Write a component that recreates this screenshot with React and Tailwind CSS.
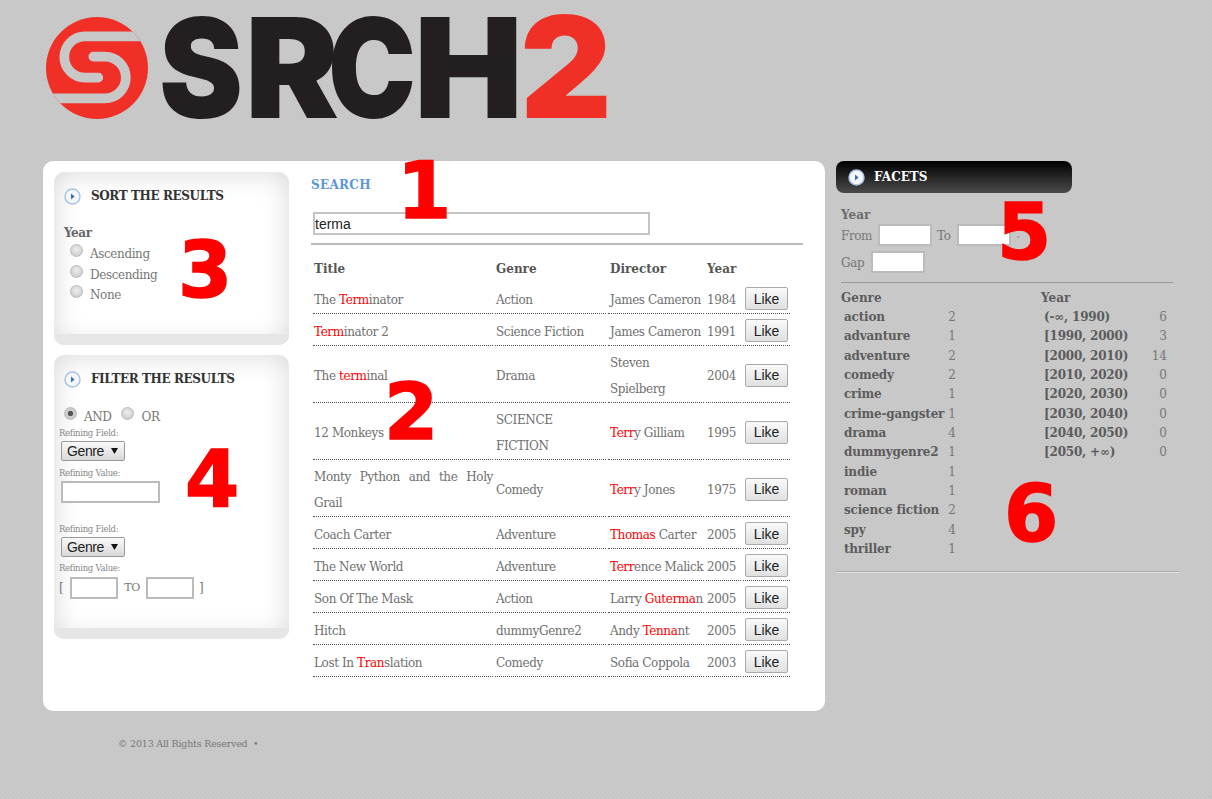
const serif = { fontFamily: '"DejaVu Serif", serif' };

const Hl = ({ children }) => <span className="text-[#f00]">{children}</span>;

const movies = [
  { title: <>The <Hl>Term</Hl>inator</>, genre: 'Action', director: 'James Cameron', year: 1984 },
  { title: <><Hl>Term</Hl>inator 2</>, genre: 'Science Fiction', director: 'James Cameron', year: 1991 },
  { title: <>The <Hl>term</Hl>inal</>, genre: 'Drama', director: <>Steven<br />Spielberg</>, year: 2004 },
  { title: '12 Monkeys', genre: <>SCIENCE<br />FICTION</>, director: <><Hl>Terr</Hl>y Gilliam</>, year: 1995 },
  { title: 'Monty Python and the Holy Grail', genre: 'Comedy', director: <><Hl>Terr</Hl>y Jones</>, year: 1975 },
  { title: 'Coach Carter', genre: 'Adventure', director: <><Hl>Thomas</Hl> Carter</>, year: 2005 },
  { title: 'The New World', genre: 'Adventure', director: <><Hl>Terr</Hl>ence Malick</>, year: 2005 },
  { title: 'Son Of The Mask', genre: 'Action', director: <>Larry <Hl>Guterma</Hl>n</>, year: 2005 },
  { title: 'Hitch', genre: 'dummyGenre2', director: <>Andy <Hl>Tenna</Hl>nt</>, year: 2005 },
  { title: <>Lost In <Hl>Tran</Hl>slation</>, genre: 'Comedy', director: 'Sofia Coppola', year: 2003 },
];

const genres = [
  ['action', 2], ['advanture', 1], ['adventure', 2], ['comedy', 2], ['crime', 1],
  ['crime-gangster', 1], ['drama', 4], ['dummygenre2', 1], ['indie', 1], ['roman', 1],
  ['science fiction', 2], ['spy', 4], ['thriller', 1],
];

const years = [
  ['(-∞, 1990)', 6], ['[1990, 2000)', 3], ['[2000, 2010)', 14], ['[2010, 2020)', 0],
  ['[2020, 2030)', 0], ['[2030, 2040)', 0], ['[2040, 2050)', 0], ['[2050, +∞)', 0],
];

const PlayIcon = () => (
  <svg width="17" height="17" viewBox="0 0 17 17" className="shrink-0">
    <circle cx="8.5" cy="8.5" r="7.5" fill="#f4f7fb" stroke="#a9c3e4" strokeWidth="1.5" />
    <path d="M7 5.6 L10.6 8.5 L7 11.4 Z" fill="#3a6fb0" />
  </svg>
);

const Radio = ({ checked }) => (
  <input
    type="radio"
    readOnly
    checked={!!checked}
    className="appearance-none w-[13px] h-[13px] rounded-full border border-[#bbb] bg-[radial-gradient(circle_at_50%_40%,#eee,#c4c4c4)] checked:bg-[radial-gradient(circle,#555_30%,#ccc_38%)] m-0 shrink-0"
  />
);

const Panel = ({ title, className, children }) => (
  <div className={`flex flex-col rounded-[10px] overflow-hidden bg-white shadow-[inset_0_0_28px_rgba(0,0,0,0.16)] ${className}`}>
    <div className="flex-1">
      <div className="flex items-center gap-[10px] pl-[10px] pt-[16px]">
        <PlayIcon />
        <span className="font-bold text-[12px] leading-[17px] text-[#333]">{title}</span>
      </div>
      {children}
    </div>
    <div className="h-[11px] bg-[#e6e6e6]" />
  </div>
);

const SelectBox = () => (
  <button className="flex items-center justify-between w-[64px] h-[20px] ml-[2px] pl-[5px] pr-[6px] rounded-[2px] border border-[#999] bg-[linear-gradient(#fafafa,#d8d8d8)] text-[14px] text-[#222]" style={{ fontFamily: '"Liberation Sans", sans-serif' }}>
    Genre
    <svg width="7" height="6" viewBox="0 0 7 6"><path d="M0 0 H7 L3.5 6 Z" fill="#111" /></svg>
  </button>
);

const Field = ({ className }) => (
  <input type="text" readOnly className={`block bg-white border-2 border-[#bbb] ${className}`} />
);

const FacetList = ({ heading, rows, nameWidth, countWidth }) => (
  <div className="text-[12px] leading-[19.33px] text-[#5c5c5c]">
    <div className="font-bold h-[18px] leading-[17px]">{heading}</div>
    {rows.map(([name, count]) => (
      <div key={name} className="flex pl-[3px]">
        <span className="font-bold tracking-[-0.2px] whitespace-nowrap" style={{ width: nameWidth }}>{name}</span>
        <span className="text-right text-[#777]" style={{ width: countWidth }}>{count}</span>
      </div>
    ))}
  </div>
);

const bigNumbers = [
  ['1', 'left-[397px] top-[152px]'],
  ['2', 'left-[384px] top-[373px]'],
  ['3', 'left-[178px] top-[231px]'],
  ['4', 'left-[185px] top-[440px]'],
  ['5', 'left-[997px] top-[193px]'],
  ['6', 'left-[1004px] top-[475px]'],
];

const Logo = () => (
  <svg width="620" height="130" viewBox="0 0 620 130" className="block">
    <defs>
      <clipPath id="mark">
        <circle cx="97" cy="68" r="51" />
      </clipPath>
    </defs>
    <circle cx="97" cy="68" r="51" fill="#f03026" />
    <g clipPath="url(#mark)">
      <g transform="translate(30 5) scale(0.3333)" fill="none" stroke="#c8c8c8" strokeWidth="29" strokeLinecap="round">
        <path d="M360 94 H165 A62 62 0 0 0 165 218 H205" />
        <path d="M30 280 H225 A62.5 62.5 0 0 0 225 155 H190" />
      </g>
    </g>
    <g fontFamily="Inter, sans-serif" fontWeight="900" fontSize="139" fill="#231f20">
      <text x="159" y="118" textLength="84" lengthAdjust="spacingAndGlyphs">S</text>
      <text x="245" y="118" textLength="94" lengthAdjust="spacingAndGlyphs">R</text>
      <text x="328" y="118" textLength="88" lengthAdjust="spacingAndGlyphs">C</text>
      <text x="414" y="118" textLength="109" lengthAdjust="spacingAndGlyphs">H</text>
    </g>
    <text x="520" y="118" textLength="92" lengthAdjust="spacingAndGlyphs" fontFamily="Inter, sans-serif" fontWeight="900" fontSize="141" fill="#f03026">2</text>
  </svg>
);

export default function App() {
  return (
    <div
      className="relative min-h-[799px] overflow-hidden bg-[linear-gradient(135deg,#c5c5c5_25%,#cbcbcb_25%,#cbcbcb_50%,#c5c5c5_50%,#c5c5c5_75%,#cbcbcb_75%)] bg-[length:4px_4px] text-[#666]"
      style={serif}
    >
      <header className="h-[161px]">
        <Logo />
      </header>

      <div className="flex items-start ml-[43px] gap-[11px]">
        <main className="flex w-[782px] h-[550px] bg-white rounded-[10px] pt-[11px] pl-[11px]">
          <aside className="flex flex-col gap-[10px] w-[235px] text-[12px] tracking-[-0.4px]">
            <Panel title="SORT THE RESULTS" className="h-[173px]">
              <div className="pl-[10px] pt-[20px]">
                <div className="font-bold text-[#666] leading-[16px]">Year</div>
                {['Ascending', 'Descending', 'None'].map((label) => (
                  <label key={label} className="flex items-start gap-[7px] pl-[6px] h-[20.5px] leading-[20px] text-[#777]">
                    <span className="pt-[2px]"><Radio /></span>
                    <span className="pt-[3px]">{label}</span>
                  </label>
                ))}
              </div>
            </Panel>

            <Panel title="FILTER THE RESULTS" className="h-[284px]">
              <div className="pl-[5px] pt-[15px]">
                <div className="flex items-center pl-[5px] h-[20px] text-[#777]">
                  <Radio checked />
                  <span className="ml-[7px] mr-[9px] pt-[7px]">AND</span>
                  <Radio />
                  <span className="ml-[8px] pt-[7px]">OR</span>
                </div>
                <div className="text-[8.5px] tracking-[-0.3px] h-[13px] leading-[15px] text-[#888] mt-[3px]">Refining Field:</div>
                <div className="mt-[2px]"><SelectBox /></div>
                <div className="text-[8.5px] tracking-[-0.3px] h-[13px] leading-[15px] text-[#888] mt-[5px]">Refining Value:</div>
                <Field className="w-[99px] h-[22px] ml-[2px] mt-[2px]" />
                <div className="text-[8.5px] tracking-[-0.3px] h-[13px] leading-[15px] text-[#888] mt-[19px]">Refining Field:</div>
                <div className="mt-[2px]"><SelectBox /></div>
                <div className="text-[8.5px] tracking-[-0.3px] h-[13px] leading-[15px] text-[#888] mt-[4px]">Refining Value:</div>
                <div className="flex items-center mt-[3px] text-[#777]">
                  <span className="w-[11px]">[</span>
                  <Field className="w-[48px] h-[22px]" />
                  <span className="w-[28px] text-center text-[11px]">TO</span>
                  <Field className="w-[48px] h-[22px]" />
                  <span className="ml-[5px]">]</span>
                </div>
              </div>
            </Panel>
          </aside>

          <section className="w-[492px] ml-[22px] text-[12px]">
            <div className="font-bold tracking-[0.3px] leading-[17px] text-[#5b96d6] mt-[5px]">SEARCH</div>
            <input
              type="text"
              readOnly
              value="terma"
              className="block w-[337px] h-[23px] ml-[2px] mt-[18px] bg-white border-2 border-[#c4c4c4] text-[14px] text-[#222]"
              style={{ fontFamily: '"Liberation Sans", sans-serif' }}
            />
            <div className="h-[2px] bg-[#bbb] mt-[8px] mb-[2px]" />
            <table className="w-[481px] table-fixed border-separate border-spacing-[2px]">
              <colgroup>
                <col className="w-[180px]" />
                <col className="w-[111px]" />
                <col className="w-[96px]" />
                <col className="w-[35px]" />
                <col className="w-[47px]" />
              </colgroup>
              <thead>
                <tr className="h-[33px] text-left font-bold text-[#555]">
                  <th className="pl-px pt-[6px]">Title</th>
                  <th className="pl-px pt-[6px]">Genre</th>
                  <th className="pl-[2px] pt-[6px]">Director</th>
                  <th className="pl-px pt-[6px]" colSpan={2}>Year</th>
                </tr>
              </thead>
              <tbody className="leading-[26px] text-[#707070] tracking-[-0.4px]">
                {movies.map((m, i) => (
                  <tr key={i} className="h-[30px]">
                    <td className="pl-px pt-[2px] border-b border-dotted border-[#555] text-justify">{m.title}</td>
                    <td className="pl-px pt-[2px] border-b border-dotted border-[#555]">{m.genre}</td>
                    <td className="pl-[2px] pt-[2px] border-b border-dotted border-[#555] whitespace-nowrap">{m.director}</td>
                    <td className="pl-px pt-[2px] border-b border-dotted border-[#555]">{m.year}</td>
                    <td className="py-px border-b border-dotted border-[#555] pl-[2px]">
                      <button
                        className="block w-[43px] h-[23px] rounded-[2px] border border-[#aaa] bg-[linear-gradient(#fafafa,#e0e0e0)] text-[14px] tracking-normal leading-none text-[#222]"
                        style={{ fontFamily: '"Liberation Sans", sans-serif' }}
                      >
                        Like
                      </button>
                    </td>
                  </tr>
                ))}
              </tbody>
            </table>
          </section>
        </main>

        <aside className="w-[343px] text-[12px] text-[#6b6b6b]">
          <div className="flex items-center gap-[9px] w-[236px] h-[32px] pl-[12px] rounded-[8px] bg-[linear-gradient(#000,#4a4a4a)]">
            <PlayIcon />
            <span className="font-bold text-white">FACETS</span>
          </div>
          <div className="pl-[5px] pt-[15px]">
            <div className="font-bold leading-[15px]">Year</div>
            <div className="flex items-center h-[24px] text-[#777] tracking-[-0.4px]">
              <span className="w-[37px] pt-[2px]">From</span>
              <Field className="w-[54px] h-[22px]" />
              <span className="w-[25px] pl-[5px] pt-[2px]">To</span>
              <Field className="w-[54px] h-[22px]" />
              <span className="ml-[6px] text-[9px]">,</span>
            </div>
            <div className="flex items-center h-[24px] mt-[3px] text-[#777] tracking-[-0.4px]">
              <span className="w-[30px] pt-[2px]">Gap</span>
              <Field className="w-[54px] h-[22px]" />
            </div>
          </div>
          <div className="h-px bg-[#999] ml-[5px] mr-[6px] mt-[8px]" />
          <div className="flex pl-[5px] pt-[7px] gap-[85px]">
            <FacetList heading="Genre" rows={genres} nameWidth={97} countWidth={15} />
            <FacetList heading="Year" rows={years} nameWidth={100} countWidth={23} />
          </div>
          <div className="h-[2px] bg-[#e2e2e2] border-t border-[#aaa] mt-[12px]" />
        </aside>
      </div>

      <footer className="pl-[118px] pt-[26px] text-[9.5px] tracking-[-0.2px] leading-[14px] text-[#777]">© 2013 All Rights Reserved &nbsp;•</footer>

      {bigNumbers.map(([n, pos]) => (
        <span
          key={n}
          className={`absolute ${pos} text-[78px] leading-none font-bold text-[#f00] [-webkit-text-stroke:1.5px_#f00]`}
          style={{ fontFamily: '"DejaVu Sans", sans-serif' }}
        >
          {n}
        </span>
      ))}
    </div>
  );
}
